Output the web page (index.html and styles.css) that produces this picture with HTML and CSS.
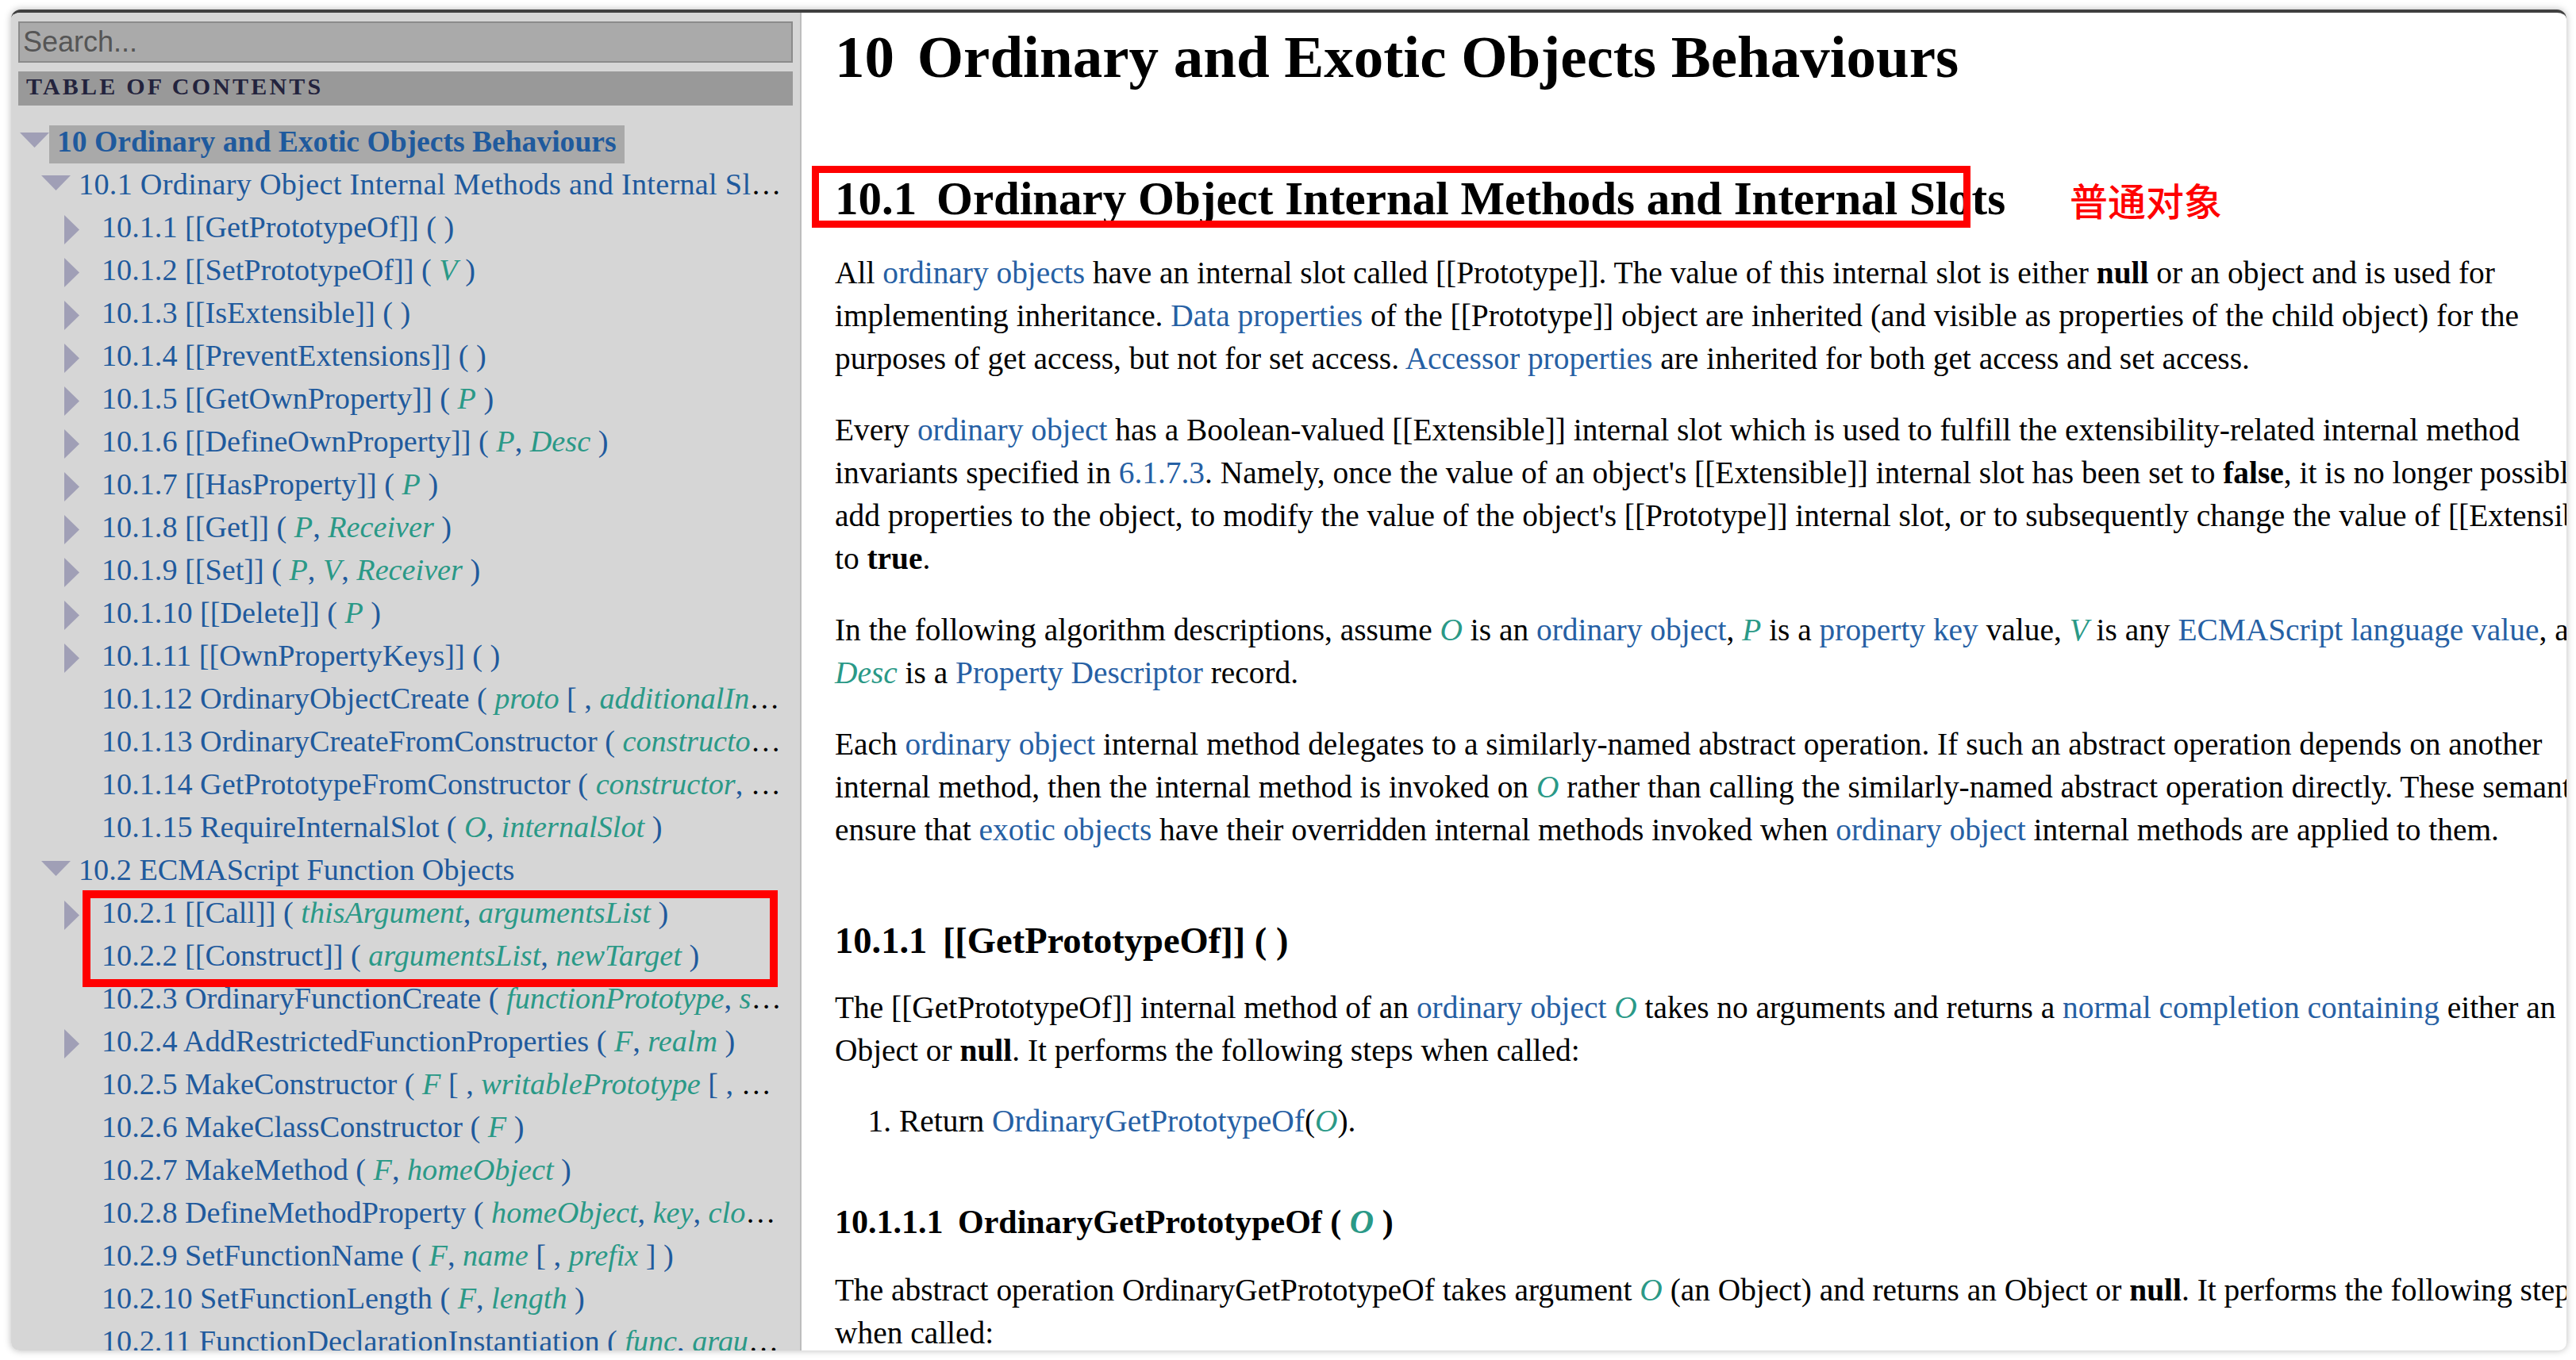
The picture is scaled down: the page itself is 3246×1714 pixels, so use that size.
FILE: index.html
```html
<!DOCTYPE html>
<html lang="en">
<head>
<meta charset="utf-8">
<title>ECMAScript Specification – 10 Ordinary and Exotic Objects Behaviours</title>
<link rel="stylesheet" href="styles.css">
</head>
<body>
<div class="window">
  <aside class="sidebar">
    <input class="search" type="text" placeholder="Search...">
    <div class="toc-header">TABLE OF CONTENTS</div>
    <ol class="toc">
      <li class="row l1"><span class="tog"><svg class="tri-d" width="37" height="19" viewBox="0 0 37 19"><polygon points="0,0 37,0 18.5,19"/></svg></span><span class="label current"><a href="#sec-10">10 Ordinary and Exotic Objects Behaviours</a></span></li>
      <li class="row l2"><span class="tog"><svg class="tri-d" width="37" height="19" viewBox="0 0 37 19"><polygon points="0,0 37,0 18.5,19"/></svg></span><span class="label loose"><a href="#sec-10.1">10.1 Ordinary Object Internal Methods and Internal Slots</a></span></li>
      <li class="row l3"><span class="tog"><svg class="tri-r" width="19" height="37" viewBox="0 0 19 37"><polygon points="0,0 19,18.5 0,37"/></svg></span><span class="label"><a href="#">10.1.1 [[GetPrototypeOf]] ( )</a></span></li>
      <li class="row l3"><span class="tog"><svg class="tri-r" width="19" height="37" viewBox="0 0 19 37"><polygon points="0,0 19,18.5 0,37"/></svg></span><span class="label"><a href="#">10.1.2 [[SetPrototypeOf]] ( <var>V</var> )</a></span></li>
      <li class="row l3"><span class="tog"><svg class="tri-r" width="19" height="37" viewBox="0 0 19 37"><polygon points="0,0 19,18.5 0,37"/></svg></span><span class="label"><a href="#">10.1.3 [[IsExtensible]] ( )</a></span></li>
      <li class="row l3"><span class="tog"><svg class="tri-r" width="19" height="37" viewBox="0 0 19 37"><polygon points="0,0 19,18.5 0,37"/></svg></span><span class="label"><a href="#">10.1.4 [[PreventExtensions]] ( )</a></span></li>
      <li class="row l3"><span class="tog"><svg class="tri-r" width="19" height="37" viewBox="0 0 19 37"><polygon points="0,0 19,18.5 0,37"/></svg></span><span class="label"><a href="#">10.1.5 [[GetOwnProperty]] ( <var>P</var> )</a></span></li>
      <li class="row l3"><span class="tog"><svg class="tri-r" width="19" height="37" viewBox="0 0 19 37"><polygon points="0,0 19,18.5 0,37"/></svg></span><span class="label"><a href="#">10.1.6 [[DefineOwnProperty]] ( <var>P</var>, <var>Desc</var> )</a></span></li>
      <li class="row l3"><span class="tog"><svg class="tri-r" width="19" height="37" viewBox="0 0 19 37"><polygon points="0,0 19,18.5 0,37"/></svg></span><span class="label"><a href="#">10.1.7 [[HasProperty]] ( <var>P</var> )</a></span></li>
      <li class="row l3"><span class="tog"><svg class="tri-r" width="19" height="37" viewBox="0 0 19 37"><polygon points="0,0 19,18.5 0,37"/></svg></span><span class="label"><a href="#">10.1.8 [[Get]] ( <var>P</var>, <var>Receiver</var> )</a></span></li>
      <li class="row l3"><span class="tog"><svg class="tri-r" width="19" height="37" viewBox="0 0 19 37"><polygon points="0,0 19,18.5 0,37"/></svg></span><span class="label"><a href="#">10.1.9 [[Set]] ( <var>P</var>, <var>V</var>, <var>Receiver</var> )</a></span></li>
      <li class="row l3"><span class="tog"><svg class="tri-r" width="19" height="37" viewBox="0 0 19 37"><polygon points="0,0 19,18.5 0,37"/></svg></span><span class="label"><a href="#">10.1.10 [[Delete]] ( <var>P</var> )</a></span></li>
      <li class="row l3"><span class="tog"><svg class="tri-r" width="19" height="37" viewBox="0 0 19 37"><polygon points="0,0 19,18.5 0,37"/></svg></span><span class="label"><a href="#">10.1.11 [[OwnPropertyKeys]] ( )</a></span></li>
      <li class="row l3"><span class="tog"></span><span class="label"><a href="#">10.1.12 OrdinaryObjectCreate ( <var>proto</var> [ , <var>additionalInternalSlotsList</var> ] )</a></span></li>
      <li class="row l3"><span class="tog"></span><span class="label"><a href="#">10.1.13 OrdinaryCreateFromConstructor ( <var>constructor</var>, <var>intrinsicDefaultProto</var> [ , <var>internalSlotsList</var> ] )</a></span></li>
      <li class="row l3"><span class="tog"></span><span class="label"><a href="#">10.1.14 GetPrototypeFromConstructor ( <var>constructor</var>, <var>intrinsicDefaultProto</var> )</a></span></li>
      <li class="row l3"><span class="tog"></span><span class="label"><a href="#">10.1.15 RequireInternalSlot ( <var>O</var>, <var>internalSlot</var> )</a></span></li>
      <li class="row l2"><span class="tog"><svg class="tri-d" width="37" height="19" viewBox="0 0 37 19"><polygon points="0,0 37,0 18.5,19"/></svg></span><span class="label"><a href="#">10.2 ECMAScript Function Objects</a></span></li>
      <li class="row l3"><span class="tog"><svg class="tri-r" width="19" height="37" viewBox="0 0 19 37"><polygon points="0,0 19,18.5 0,37"/></svg></span><span class="label"><a href="#">10.2.1 [[Call]] ( <var>thisArgument</var>, <var>argumentsList</var> )</a></span></li>
      <li class="row l3"><span class="tog"></span><span class="label"><a href="#">10.2.2 [[Construct]] ( <var>argumentsList</var>, <var>newTarget</var> )</a></span></li>
      <li class="row l3"><span class="tog"></span><span class="label"><a href="#">10.2.3 OrdinaryFunctionCreate ( <var>functionPrototype</var>, <var>sourceText</var>, <var>ParameterList</var>, <var>Body</var>, <var>thisMode</var>, <var>env</var>, <var>privateEnv</var> )</a></span></li>
      <li class="row l3"><span class="tog"><svg class="tri-r" width="19" height="37" viewBox="0 0 19 37"><polygon points="0,0 19,18.5 0,37"/></svg></span><span class="label"><a href="#">10.2.4 AddRestrictedFunctionProperties ( <var>F</var>, <var>realm</var> )</a></span></li>
      <li class="row l3"><span class="tog"></span><span class="label"><a href="#">10.2.5 MakeConstructor ( <var>F</var> [ , <var>writablePrototype</var> [ , <var>prototype</var> ] ] )</a></span></li>
      <li class="row l3"><span class="tog"></span><span class="label"><a href="#">10.2.6 MakeClassConstructor ( <var>F</var> )</a></span></li>
      <li class="row l3"><span class="tog"></span><span class="label"><a href="#">10.2.7 MakeMethod ( <var>F</var>, <var>homeObject</var> )</a></span></li>
      <li class="row l3"><span class="tog"></span><span class="label"><a href="#">10.2.8 DefineMethodProperty ( <var>homeObject</var>, <var>key</var>, <var>closure</var>, <var>enumerable</var> )</a></span></li>
      <li class="row l3"><span class="tog"></span><span class="label"><a href="#">10.2.9 SetFunctionName ( <var>F</var>, <var>name</var> [ , <var>prefix</var> ] )</a></span></li>
      <li class="row l3"><span class="tog"></span><span class="label"><a href="#">10.2.10 SetFunctionLength ( <var>F</var>, <var>length</var> )</a></span></li>
      <li class="row l3"><span class="tog"></span><span class="label"><a href="#">10.2.11 FunctionDeclarationInstantiation ( <var>func</var>, <var>argumentsList</var> )</a></span></li>
    </ol>
    <div class="mark-box side-box"></div>
  </aside>

  <main class="main">
    <h1 class="h1"><span class="secnum">10</span> Ordinary and Exotic Objects Behaviours</h1>
    <h2 class="h2"><span class="secnum">10.1</span> Ordinary Object Internal Methods and Internal Slots</h2>
    <p class="p1">All <a href="#">ordinary objects</a> have an internal slot called [[Prototype]]. The value of this internal slot is either <b>null</b> or an object and is used for<br>implementing inheritance. <a href="#">Data properties</a> of the [[Prototype]] object are inherited (and visible as properties of the child object) for the<br>purposes of get access, but not for set access. <a href="#">Accessor properties</a> are inherited for both get access and set access.</p>
    <p>Every <a href="#">ordinary object</a> has a Boolean-valued [[Extensible]] internal slot which is used to fulfill the extensibility-related internal method<br>invariants specified in <a href="#">6.1.7.3</a>. Namely, once the value of an object's [[Extensible]] internal slot has been set to <b>false</b>, it is no longer possible to<br>add properties to the object, to modify the value of the object's [[Prototype]] internal slot, or to subsequently change the value of [[Extensible]]<br>to <b>true</b>.</p>
    <p>In the following algorithm descriptions, assume <var>O</var> is an <a href="#">ordinary object</a>, <var>P</var> is a <a href="#">property key</a> value, <var>V</var> is any <a href="#">ECMAScript language value</a>, and<br><var>Desc</var> is a <a href="#">Property Descriptor</a> record.</p>
    <p>Each <a href="#">ordinary object</a> internal method delegates to a similarly-named abstract operation. If such an abstract operation depends on another<br>internal method, then the internal method is invoked on <var>O</var> rather than calling the similarly-named abstract operation directly. These semantics<br>ensure that <a href="#">exotic objects</a> have their overridden internal methods invoked when <a href="#">ordinary object</a> internal methods are applied to them.</p>
    <h3 class="h3"><span class="secnum">10.1.1</span> [[GetPrototypeOf]] ( )</h3>
    <p class="p5">The [[GetPrototypeOf]] internal method of an <a href="#">ordinary object</a> <var>O</var> takes no arguments and returns a <a href="#">normal completion containing</a> either an<br>Object or <b>null</b>. It performs the following steps when called:</p>
    <ol class="steps">
      <li>Return <a href="#">OrdinaryGetPrototypeOf</a>(<var>O</var>).</li>
    </ol>
    <h4 class="h4"><span class="secnum">10.1.1.1</span> OrdinaryGetPrototypeOf ( <var>O</var> )</h4>
    <p class="p6">The abstract operation OrdinaryGetPrototypeOf takes argument <var>O</var> (an Object) and returns an Object or <b>null</b>. It performs the following steps<br>when called:</p>

    <div class="mark-box main-box"></div>
    <div class="note">普通对象</div>
  </main>
</div>
</body>
</html>
```
FILE: styles.css
```css
* { box-sizing: border-box; }

html, body {
  margin: 0;
  padding: 0;
}

body {
  width: 3246px;
  height: 1714px;
  overflow: hidden;
  background: #ffffff;
  font-family: "Liberation Serif", "Times New Roman", serif;
}

.window {
  position: relative;
  margin: 12px 0 0 14px;
  width: 3220px;
  height: 1690px;
  border-top: 4px solid #404040;
  border-radius: 12px 12px 10px 10px;
  overflow: hidden;
  display: flex;
  background: #ffffff;
  box-shadow: 0 0 10px rgba(0, 0, 0, 0.28);
}

/* ---------- sidebar ---------- */
.sidebar {
  position: relative;
  flex: 0 0 996px;
  background: #d6d6d6;
  border-right: 2px solid #bdbdbd;
  padding: 11px 9px 0;
  overflow: hidden;
}

.search {
  display: block;
  width: 100%;
  height: 52px;
  margin: 0;
  padding: 0 4px;
  border: 2px solid #8b8b8b;
  background: #aaaaaa;
  color: #333;
  font: 36px "Liberation Sans", Arial, sans-serif;
  outline: none;
}
.search::placeholder { color: #555555; opacity: 1; }

.toc-header {
  margin-top: 11px;
  height: 43px;
  background: #999999;
  color: #23233d;
  font: bold 30px/38px "Liberation Serif", serif;
  letter-spacing: 3.2px;
  padding-left: 10px;
}

.toc {
  list-style: none;
  margin: 22px 0 0;
  padding: 0;
}

.row {
  display: flex;
  align-items: flex-start;
  height: 54px;
  white-space: nowrap;
  color: #000;
}
.row.l1 { padding-left: 2px; }
.row.l2 { padding-left: 29px; }
.row.l3 { padding-left: 58px; }

.tog {
  flex: 0 0 37px;
  height: 54px;
}
.tog svg { display: block; fill: #a09fb6; }
.tog .tri-d { margin-top: 12px; }
.tog .tri-r { margin-top: 8px; }

.label {
  flex: 0 1 auto;
  min-width: 0;
  overflow: hidden;
  text-overflow: ellipsis;
  padding: 0 10px;
  font-size: 38.2px;
  line-height: 47px;
  color: #000;
}
.label.loose { letter-spacing: 0.3px; }
.label.current {
  margin-top: 3px;
  line-height: 42px;
  padding-bottom: 6px;
  background: #a9a9a9;
  font-size: 37.6px;
  font-weight: bold;
}
.label a { color: #1f5a9d; text-decoration: none; }

var {
  font-style: italic;
  color: #2a9987;
}

/* ---------- main ---------- */
.main {
  position: relative;
  flex: 1 1 auto;
  min-width: 0;
  overflow: hidden;
  padding: 19px 0 0 42px;
  font-size: 39.4px;
  line-height: 54px;
  color: #000;
}

.main a { color: #2660a4; text-decoration: none; }
.main b { font-weight: bold; }

.main p {
  margin: 36px 0 0;
  white-space: nowrap;
}

.secnum { margin-right: 10px; }

.h1 {
  margin: 0;
  font-size: 75px;
  line-height: 74px;
  font-weight: bold;
  white-space: nowrap;
}

.h2 {
  margin: 106px 0 0;
  font-size: 59px;
  line-height: 70px;
  font-weight: bold;
  white-space: nowrap;
}

.main p.p1 { margin-top: 32px; }

.h3 {
  margin: 86px 0 0;
  font-size: 46.5px;
  line-height: 54px;
  font-weight: bold;
  white-space: nowrap;
}
.h3 .secnum { margin-right: 8px; }

.main p.p5 { margin-top: 30px; }

.steps {
  margin: 35px 0 0;
  padding-left: 81px;
}

.h4 {
  margin: 76px 0 0;
  font-size: 42px;
  line-height: 49px;
  font-weight: bold;
  white-space: nowrap;
}
.h4 .secnum { margin-right: 8px; }

.main p.p6 { margin-top: 34px; }

/* ---------- annotations ---------- */
.mark-box {
  position: absolute;
  border: 9px solid #ff0000;
}
.side-box {
  left: 90px;
  top: 1106px;
  width: 876px;
  height: 122px;
  border-width: 10px;
}
.main-box {
  left: 13px;
  top: 193px;
  width: 1460px;
  height: 78px;
}

.note {
  position: absolute;
  left: 1598px;
  top: 211px;
  font-family: "Noto Sans CJK SC", sans-serif;
  font-weight: 500;
  font-size: 48px;
  line-height: 1;
  color: #ff0000;
}
```
